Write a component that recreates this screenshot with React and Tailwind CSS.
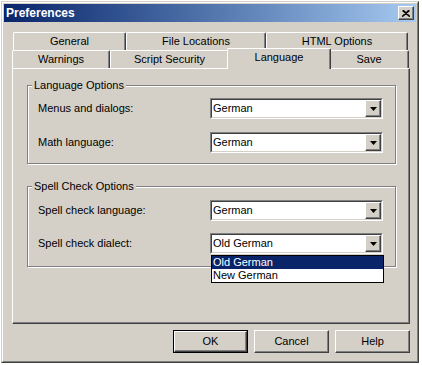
import React from 'react';

const raised = 'border border-t-white border-l-white border-r-[#404040] border-b-[#404040] shadow-[inset_-1px_-1px_0_#808080]';

const Combo = ({ value, children }) => (
  <div className="relative w-[173px] h-[21px] border border-t-[#808080] border-l-[#808080] border-r-white border-b-white">
    <div className="h-full flex items-center justify-between bg-white border border-t-[#404040] border-l-[#404040] border-r-[#d4d0c8] border-b-[#d4d0c8]">
      <span className="pl-px leading-none">{value}</span>
      <div className={`w-[16px] h-[17px] bg-[#d4d0c8] flex items-center justify-center ${raised}`}>
        <svg width="7" height="4" viewBox="0 0 7 4">
          <path d="M0 0h7L3.5 4z" fill="#000" />
        </svg>
      </div>
    </div>
    {children}
  </div>
);

const Row = ({ label, value, children }) => (
  <div className="flex items-center h-[21px]">
    <div className="w-[182px] pl-[10px]">{label}</div>
    <Combo value={value}>{children}</Combo>
  </div>
);

const Group = ({ title, className, children }) => (
  <div className={`relative ml-[14px] w-[369px] border border-[#808080] shadow-[inset_1px_1px_0_#fff,1px_1px_0_#fff] ${className}`}>
    <span className="absolute left-[4px] -top-[7px] px-[2px] bg-[#d4d0c8] leading-[13px]">{title}</span>
    {children}
  </div>
);

const Tab = ({ label, w }) => (
  <div
    className={`h-[18px] flex items-center justify-center rounded-t-[2px] border-l border-t border-r border-l-white border-t-white border-r-[#404040] shadow-[inset_-1px_0_0_#808080] ${w}`}
  >
    {label}
  </div>
);

const Button = ({ label, primary }) => (
  <div className={`w-[75px] h-[23px] ${primary ? 'border border-black' : ''}`}>
    <div className={`h-full flex items-center justify-center ${raised}`}>{label}</div>
  </div>
);

export default function App() {
  return (
    <div className="w-[422px] h-[365px] bg-white font-['Liberation_Sans',Arial,sans-serif] text-[11px] text-black">
      <div className="ml-px mt-px w-[418px] h-[362px] border border-t-[#d4d0c8] border-l-[#d4d0c8] border-r-[#404040] border-b-[#404040]">
        <div className="h-full bg-[#d4d0c8] p-px border border-t-white border-l-white border-r-[#808080] border-b-[#808080]">
          {/* title bar */}
          <div className="h-[18px] flex items-center justify-between pl-[2px] pr-[2px] bg-gradient-to-r from-[#0a246a] to-[#a6caf0]">
            <span className="text-white font-bold text-[12px]">Preferences</span>
            <div className={`w-[16px] h-[14px] bg-[#d4d0c8] flex items-center justify-center ${raised}`}>
              <svg width="8" height="7" viewBox="0 0 8 7">
                <path d="M0.5 0.5L7.5 6.5M1.5 0.5L8 6.5M7.5 0.5L0.5 6.5M6.5 0.5L0 6.5" stroke="#000" strokeWidth="1.2" />
              </svg>
            </div>
          </div>

          {/* tabs */}
          <div className="mt-[10px] ml-[9px] flex">
            <Tab label="General" w="w-[113px]" />
            <Tab label="File Locations" w="w-[140px]" />
            <Tab label="HTML Options" w="w-[142px]" />
          </div>
          <div className="ml-[8px] flex h-[18px] items-start">
            <Tab label="Warnings" w="w-[98px]" />
            <Tab label="Script Security" w="w-[119px]" />
            <div className="relative z-10 -mt-[2px] -mx-[2px] w-[104px] h-[21px] pb-[3px] bg-[#d4d0c8] flex items-center justify-center rounded-t-[2px] border-l border-t border-r border-l-white border-t-white border-r-[#404040] shadow-[inset_-1px_0_0_#808080]">
              Language
            </div>
            <Tab label="Save" w="w-[80px]" />
          </div>

          {/* panel */}
          <div className={`ml-[8px] w-[398px] h-[256px] border border-t-white border-l-white border-r-[#404040] border-b-[#404040] shadow-[inset_-1px_-1px_0_#808080]`}>
            <Group title="Language Options" className="mt-[16px] h-[79px] pt-[12px] flex flex-col gap-[13px]">
              <Row label="Menus and dialogs:" value="German" />
              <Row label="Math language:" value="German" />
            </Group>
            <Group title="Spell Check Options" className="mt-[22px] h-[81px] pt-[13px] flex flex-col gap-[12px]">
              <Row label="Spell check language:" value="German" />
              <Row label="Spell check dialect:" value="Old German">
                <div className="absolute left-0 top-[21px] w-[173px] bg-white border border-black z-20">
                  <div className="h-[13px] leading-[13px] px-[1px] bg-[#0a246a] text-white">Old German</div>
                  <div className="h-[13px] leading-[13px] px-[1px]">New German</div>
                </div>
              </Row>
            </Group>
          </div>

          {/* buttons */}
          <div className="mt-[6px] w-[406px] flex justify-end gap-[6px]">
            <Button label="OK" primary />
            <Button label="Cancel" />
            <Button label="Help" />
          </div>
        </div>
      </div>
    </div>
  );
}
